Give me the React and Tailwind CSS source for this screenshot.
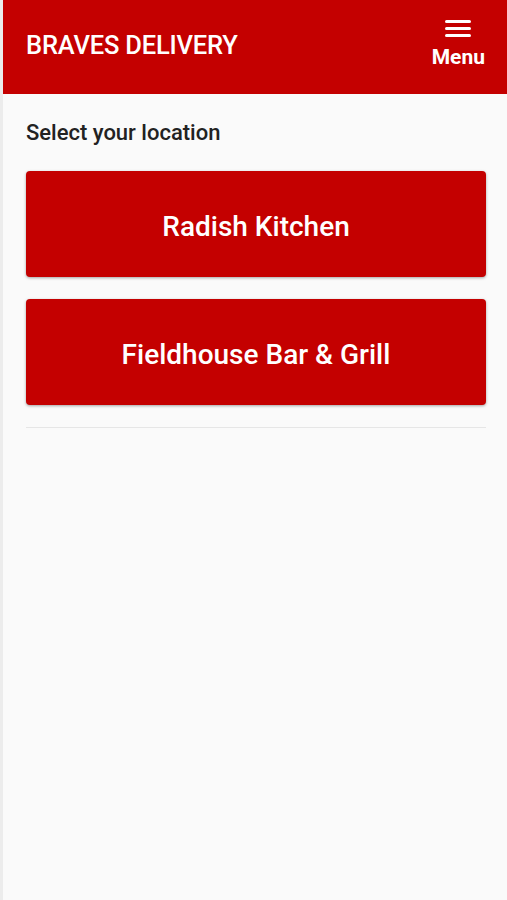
export default function App() {
  const locations = ["Radish Kitchen", "Fieldhouse Bar & Grill"];

  return (
    <div
      className="flex min-h-[900px] bg-[#ececec]"
      style={{ fontFamily: "Roboto, 'Liberation Sans', sans-serif" }}
    >
      <div className="ml-[3px] flex flex-1 flex-col bg-[#fafafa]">
        {/* Header */}
        <header className="flex h-[94px] items-start justify-between bg-[#c40000] pl-[23px] pr-[22px]">
          <h1 className="mt-[30px] text-[25.5px] font-medium leading-[30px] tracking-[-0.2px] text-white">
            BRAVES DELIVERY
          </h1>
          <button className="mt-[20px] flex flex-col items-center text-white">
            <span className="flex w-[26px] flex-col gap-[4px]">
              <span className="h-[3px] rounded-sm bg-white" />
              <span className="h-[3px] rounded-sm bg-white" />
              <span className="h-[3px] rounded-sm bg-white" />
            </span>
            <span className="mt-[8px] text-[21px] font-bold leading-[24px]">
              Menu
            </span>
          </button>
        </header>

        {/* Main */}
        <main className="pl-[23px] pr-[21px] pt-[26px]">
          <p className="text-[22px] font-medium leading-[26px] text-[#222]">
            Select your location
          </p>
          <div className="mt-[25px] flex flex-col gap-[22px]">
            {locations.map((name) => (
              <button
                key={name}
                className="flex h-[106px] w-full items-center justify-center rounded-[4px] bg-[#c40000] pt-[5px] text-[28px] font-medium text-white shadow-[0_1px_3px_rgba(0,0,0,0.35)]"
              >
                {name}
              </button>
            ))}
          </div>
          <hr className="mt-[22px] border-t border-[#e6e6e6]" />
        </main>
      </div>
    </div>
  );
}
